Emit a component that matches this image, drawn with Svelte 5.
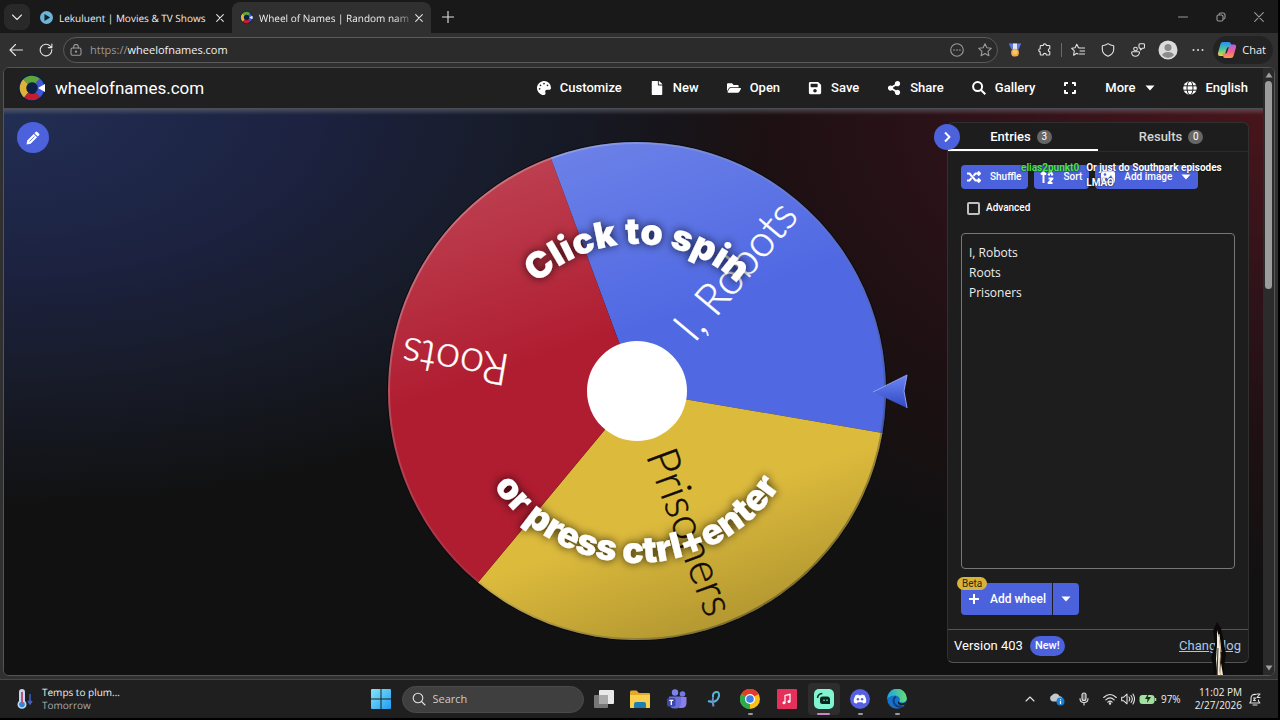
<script>
  const navItems = [
    { label: 'Customize', box: '0 0 512 512', d: 'M204.3 5C104.9 24.4 24.8 104.3 5.2 203.4c-37 187 131.7 326.4 258.8 306.7 41.2-6.4 61.4-54.6 42.5-91.7-23.1-45.4 9.9-98.4 60.9-98.4h79.7c35.8 0 64.8-29.6 64.9-65.3C511.5 97.1 368.1-26.9 204.3 5zM96 320c-17.7 0-32-14.3-32-32s14.3-32 32-32 32 14.3 32 32-14.3 32-32 32zm32-128c-17.7 0-32-14.3-32-32s14.3-32 32-32 32 14.3 32 32-14.3 32-32 32zm128-64c-17.7 0-32-14.3-32-32s14.3-32 32-32 32 14.3 32 32-14.3 32-32 32zm128 64c-17.7 0-32-14.3-32-32s14.3-32 32-32 32 14.3 32 32-14.3 32-32 32z' },
    { label: 'New', box: '0 0 384 512', d: 'M224 136V0H24C10.7 0 0 10.7 0 24v464c0 13.3 10.7 24 24 24h336c13.3 0 24-10.7 24-24V160H248c-13.2 0-24-10.8-24-24zm160-14.1v6.1H256V0h6.1c6.4 0 12.5 2.5 17 7l97.9 98c4.5 4.5 7 10.6 7 16.9z' },
    { label: 'Open', box: '0 0 576 512', d: 'M572.694 292.093L500.27 416.248A63.997 63.997 0 0 1 444.989 448H45.025c-18.523 0-30.064-20.093-20.731-36.093l72.424-124.155A64 64 0 0 1 152 256h399.964c18.523 0 30.064 20.093 20.73 36.093zM152 224h328v-48c0-26.51-21.49-48-48-48H272l-64-64H48C21.49 64 0 85.49 0 112v278.046l69.077-118.418C86.214 242.25 117.989 224 152 224z' },
    { label: 'Save', box: '0 0 448 512', d: 'M433.941 129.941l-83.882-83.882A48 48 0 0 0 316.118 32H48C21.49 32 0 53.49 0 80v352c0 26.51 21.49 48 48 48h352c26.51 0 48-21.49 48-48V163.882a48 48 0 0 0-14.059-33.941zM224 416c-35.346 0-64-28.654-64-64 0-35.346 28.654-64 64-64s64 28.654 64 64c0 35.346-28.654 64-64 64zm96-304.52V212c0 6.627-5.373 12-12 12H76c-6.627 0-12-5.373-12-12V108c0-6.627 5.373-12 12-12h228.52c3.183 0 6.235 1.264 8.485 3.515l3.48 3.48A11.996 11.996 0 0 1 320 111.48z' },
    { label: 'Share', box: '0 0 448 512', d: 'M352 320c-22.608 0-43.387 7.819-59.79 20.895l-102.486-64.054a96.551 96.551 0 0 0 0-41.683l102.486-64.054C308.613 184.181 329.392 192 352 192c53.019 0 96-42.981 96-96S405.019 0 352 0s-96 42.981-96 96c0 7.158.79 14.13 2.276 20.841L155.79 180.895C139.387 167.819 118.608 160 96 160c-53.019 0-96 42.981-96 96s42.981 96 96 96c22.608 0 43.387-7.819 59.79-20.895l102.486 64.054A96.301 96.301 0 0 0 256 416c0 53.019 42.981 96 96 96s96-42.981 96-96-42.981-96-96-96z' }
  ];

  // Wheel geometry, in the svg's own units
  const cx = 637, cy = 391, radius = 249;
  const point = (deg, r) => {
    const a = (deg * Math.PI) / 180;
    return `${cx + r * Math.cos(a)} ${cy + r * Math.sin(a)}`;
  };
  const slices = [
    { name: 'I, Robots', from: -110.3, fill: '#5069e3', ink: '#fff' },
    { name: 'Prisoners', from: 9.7, fill: '#dcba3c', ink: '#120c02' },
    { name: 'Roots', from: 129.7, fill: '#b01c30', ink: '#fff' }
  ];
  let entries = $state('I, Robots\nRoots\nPrisoners');
  let advanced = $state(false);
</script>

<div class="screen">
  <div class="tabs">
    <button class="tab-menu" aria-label="Tab actions"><svg width="12" height="12" viewBox="0 0 12 12" class="line"><path d="M1.500 4L6 8.500 10.500 4" /></svg></button>
    <div class="tab">
      <svg width="13" height="13" viewBox="0 0 14 14"><circle cx="7" cy="7" r="7" fill="#6cb5d8" /><path d="M4.800 3.300v7.400L11 7z" fill="#12242e" /></svg>
      <span class="tab-title">Lekuluent | Movies &amp; TV Shows</span>
      <button aria-label="Close tab"><svg width="8" height="8" viewBox="0 0 8 8" class="line"><path d="M.7.7l6.600 6.600M7.300.7L.7 7.300" /></svg></button>
    </div>
    <div class="tab active">
      {@render brand(13)}
      <span class="tab-title">Wheel of Names | Random name p</span>
      <button aria-label="Close tab"><svg width="8" height="8" viewBox="0 0 8 8" class="line"><path d="M.7.7l6.600 6.600M7.300.7L.7 7.300" /></svg></button>
    </div>
    <button class="new-tab" aria-label="New tab"><svg width="12" height="12" viewBox="0 0 12 12" class="line"><path d="M6 0v12M0 6h12" /></svg></button>
    <div class="window-buttons">
      <button aria-label="Minimize"><svg width="10" height="10" viewBox="0 0 10 10" class="line"><path d="M.5 5h9" /></svg></button>
      <button aria-label="Restore"><svg width="10" height="10" viewBox="0 0 10 10" class="line"><rect x="1" y="3" width="6" height="6" rx="1.500" /><path d="M3 2.500Q3 1 4.500 1H7q2 0 2 2v2.500Q9 7 7.500 7" /></svg></button>
      <button aria-label="Close"><svg width="10" height="10" viewBox="0 0 10 10" class="line"><path d="M.7.7l8.600 8.600M9.300.7L.7 9.300" /></svg></button>
    </div>
  </div>

  <div class="toolbar">
    <button aria-label="Back"><svg width="14" height="14" viewBox="0 0 14 14" class="line"><path d="M13.500 7H1M6.500 1.500L1 7l5.500 5.500" /></svg></button>
    <button aria-label="Refresh"><svg width="14" height="14" viewBox="0 0 14 14" class="line"><path d="M12.800 6.500a5.800 5.800 0 1 1-1.500-3.400L12.800 4.500M12.900 1v3.600H9.300" /></svg></button>
    <div class="address">
      <svg width="12" height="12" viewBox="0 0 12 12" class="line dim"><rect x="1" y="4" width="10" height="7.300" rx="1.500" /><path d="M3.700 4V2.700a2.300 2.300 0 0 1 4.600 0V4" /><circle cx="6" cy="7.700" r=".6" /></svg>
      <a class="url" href="https://wheelofnames.com"><span>https://</span>wheelofnames.com</a>
      <button aria-label="Page options"><svg width="14" height="14" viewBox="0 0 14 14" class="line dim"><circle cx="7" cy="7" r="6.300" /><path d="M3.700 7h1M6.500 7h1M9.300 7h1" /></svg></button>
      <button aria-label="Add to favorites"><svg width="14" height="14" viewBox="0 0 14 14" class="line dim"><path d="M7 .8l1.900 4 4.300.5-3.200 3 .9 4.400L7 10.500l-3.900 2.200.9-4.400-3.200-3 4.300-.5z" /></svg></button>
    </div>
    <div class="extensions">
      <button aria-label="Rewards"><svg width="14" height="14" viewBox="0 0 14 14"><path d="M.8.5h12.400L10.500 6.500h-7z" fill="#5c78df" /><path d="M5 .5h4v6H5z" fill="#dce7ff" /><circle cx="7" cy="9.700" r="3.900" fill="#f0ac45" /><circle cx="7" cy="9.200" r="2.300" fill="#ffc765" /></svg></button>
      <button aria-label="Extensions"><svg width="14" height="14" viewBox="0 0 14 14" class="line"><path d="M3 2.500h2.200a1.600 1.600 0 0 1 3.200 0H11q.8 0 .8.800v2.400a1.500 1.500 0 0 0 0 3v2.500q0 .8-.8.800H8.400a1.600 1.600 0 0 0-3.200 0H3q-.8 0-.8-.8V8.700a1.500 1.500 0 0 1 0-3V3.300q0-.8.8-.8z" /></svg></button>
      <i class="divider"></i>
      <button aria-label="Favorites"><svg width="14" height="14" viewBox="0 0 14 14" class="line"><path d="M8.300 5L7.500 4.800 5.800 1.200 4.100 4.800.7 5.300l2.600 2.600-.7 4.300 3.200-2 1.200.7M8.500 5H14M9 8h5M8.500 11H14" /></svg></button>
      <button aria-label="Security"><svg width="14" height="14" viewBox="0 0 14 14" class="line"><path d="M7 .7q2.300 1.900 5.700 2v3.800Q12.500 11 7 13.300 1.500 11 1.300 6.500V2.700Q4.700 2.600 7 .7z" /></svg></button>
      <button aria-label="Share feedback"><svg width="14" height="14" viewBox="0 0 14 14" class="line"><circle cx="4.500" cy="6" r="1.800" /><path d="M1.500 8.800h6.200q1 0 .7 1.200-.7 3.200-4 3.200T.7 10q-.2-1.200.8-1.200zM9 .8h3.500q1 0 1 1v2.400q0 1-1 1h-1L9.500 7V5.200H9q-1 0-1-1V1.800q0-1 1-1z" /></svg></button>
      <button aria-label="Profile"><svg width="20" height="20" viewBox="0 0 20 20"><circle cx="10" cy="10" r="9.500" fill="#dcdcdc" /><circle cx="10" cy="7.500" r="3.500" fill="#8b8b8b" /><path d="M4 15q1.500-3 6-3t6 3q-2.500 3-6 3t-6-3z" fill="#8b8b8b" /></svg></button>
      <button aria-label="More tools"><svg width="12" height="4" viewBox="0 0 12 4" fill="#ddd"><circle cx="1.500" cy="2" r="1" /><circle cx="6" cy="2" r="1" /><circle cx="10.500" cy="2" r="1" /></svg></button>
    </div>
    <button class="chat">
      <svg width="20" height="18" viewBox="0 0 20 18"><defs><linearGradient id="cpA" x1="0" y1="0" x2="0" y2="1"><stop offset="0" stop-color="#2c8cf2" /><stop offset=".5" stop-color="#44c8a0" /><stop offset="1" stop-color="#f4cf3a" /></linearGradient><linearGradient id="cpB" x1="0" y1="0" x2="0" y2="1"><stop offset="0" stop-color="#a665ee" /><stop offset=".5" stop-color="#f0608e" /><stop offset="1" stop-color="#ff9a4d" /></linearGradient></defs><path d="M6 1h6q1.500 0 2 2l.8 3h-3q-1.500 0-2 1.500L8 13q-.6 2-2 2H3Q.5 15 1 12L3.500 3Q4 1 6 1z" fill="url(#cpA)" /><path d="M14 17H8q-1.500 0-2-2l-.4-2.500h2.600q1.500 0 2-1.500L12 5.500Q12.600 3.500 14 3.500h3q2.500 0 2 3L16.500 15Q16 17 14 17z" fill="url(#cpB)" /></svg>
      Chat
    </button>
  </div>

  <div class="viewport">
    <div class="page">
      <header>
        <a class="brand" href="https://wheelofnames.com">{@render brand(28)}<span>wheelofnames.com</span></a>
        <nav>
          {#each navItems as item}
            <button><svg width="14" height="14" viewBox={item.box} fill="currentColor"><path d={item.d} /></svg>{item.label}</button>
          {/each}
          <button><svg width="14" height="14" viewBox="0 0 14 14" class="line bold"><circle cx="5.600" cy="5.600" r="4.500" /><path d="M9 9l4.300 4.300" /></svg>Gallery</button>
          <button aria-label="Fullscreen"><svg width="14" height="14" viewBox="0 0 14 14" class="line bold"><path d="M2 5V2h3M9 2h3v3M12 9v3H9M5 12H2V9" /></svg></button>
          <button>More<svg width="10" height="6" viewBox="0 0 10 6" fill="currentColor"><path d="M.5.5h9L5 5.500z" /></svg></button>
          <button><svg width="14" height="14" viewBox="0 0 14 14"><circle cx="7" cy="7" r="6.800" fill="#fff" /><g fill="none" stroke="#202020" stroke-width="1"><ellipse cx="7" cy="7" rx="3" ry="7" /><path d="M0 4.800h14M0 9.200h14" /></g></svg>English</button>
        </nav>
      </header>

      <main>
        <button class="edit" aria-label="Edit title"><svg width="14" height="14" viewBox="0 0 14 14" fill="#fff"><path d="M9.700.9q.8-.8 1.600 0l1.800 1.800q.8.8 0 1.600l-1.300 1.300-3.400-3.400zM7.700 2.900l3.400 3.400-6.500 6.500L.5 13.500l.7-4.100z" /><path d="M3.500 10.500l5-5" stroke="#4b62dc" stroke-width=".8" /></svg></button>

        <svg class="wheel" viewBox="358 109 551 566" role="img" aria-label="Click to spin or press ctrl+enter">
          <defs>
            <linearGradient id="sheen" x1=".3" y1="0" x2=".65" y2="1">
              <stop offset="0" stop-color="#fff" stop-opacity=".17" /><stop offset=".4" stop-color="#fff" stop-opacity="0" />
              <stop offset=".75" stop-color="#000" stop-opacity="0" /><stop offset="1" stop-color="#000" stop-opacity=".2" />
            </linearGradient>
            <linearGradient id="rim" x1="0" y1="0" x2="1" y2="1">
              <stop offset="0" stop-color="#fff" stop-opacity=".4" /><stop offset=".5" stop-color="#888" stop-opacity=".2" /><stop offset="1" stop-color="#000" stop-opacity=".5" />
            </linearGradient>
            <linearGradient id="pin" x1="0" y1="0" x2="0" y2="1"><stop offset="0" stop-color="#6d86f4" /><stop offset="1" stop-color="#3049c4" /></linearGradient>
            <filter id="glow" x="-30%" y="-60%" width="160%" height="220%"><feDropShadow dx="0" dy="0" stdDeviation="5" flood-color="#000" flood-opacity=".8" /></filter>
            <path id="arcTop" d="M490 391A147 147 0 0 1 784 391" />
            <path id="arcBottom" d="M465 391A172 172 0 0 0 809 391" />
          </defs>
          <circle {cx} {cy} r={radius + 1} fill="#0b0b10" />
          {#each slices as s}
            <path fill={s.fill} d={`M${cx} ${cy}L${point(s.from, radius)}A${radius} ${radius} 0 0 1 ${point(s.from + 120, radius)}Z`} />
          {/each}
          <circle {cx} {cy} r={radius} fill="url(#sheen)" />
          <circle {cx} {cy} r={radius - 1} fill="none" stroke="url(#rim)" stroke-width="2" />
          {#each slices as s}
            <text class="slice" fill={s.ink} stroke={s.ink} x={cx + 238} y={cy + 14} transform={`rotate(${s.from + 60} ${cx} ${cy})`}>{s.name}</text>
          {/each}
          <circle {cx} {cy} r="50" fill="#fff" />
          <text class="hint" filter="url(#glow)"><textPath href="#arcTop" startOffset="50%">Click to spin</textPath></text>
          <text class="hint" filter="url(#glow)"><textPath href="#arcBottom" startOffset="50%">or press ctrl+enter</textPath></text>
          <path d="M873 392L907 375 904 391 907 408z" fill="url(#pin)" />
          <path d="M873 392L907 375 904 391 907 408" fill="none" stroke="#8ea0f8" />
        </svg>

        <aside>
          <button class="collapse" aria-label="Hide panel"><svg width="12" height="12" viewBox="0 0 12 12" class="line bold"><path d="M4 1.500L8.500 6 4 10.500" /></svg></button>
          <div class="panel-tabs">
            <button class="current">Entries <b>3</b></button>
            <button>Results <b>0</b></button>
          </div>
          <div class="panel-body">
            <div class="tools">
              <button><svg width="14" height="12" viewBox="0 0 14 12" class="line bold"><path d="M0 2.500h2.500l6 7H13M0 9.500h2.500L4.500 7.200M6.500 4.800l2-2.300H13M11 .5l2 2-2 2M11 7.500l2 2-2 2" /></svg>Shuffle</button>
              <button><svg width="14" height="14" viewBox="0 0 14 14" class="line bold"><path d="M3.500 13V2M1 4.500L3.500 2 6 4.500M8.500 5.500L10.500 1l2 4.500M8.500 8.500h4L8.500 13h4" /></svg>Sort</button>
              <button><svg width="14" height="14" viewBox="0 0 14 14"><rect x="0" y="1" width="14" height="12" rx="2" fill="#fff" /><circle cx="4" cy="4.500" r="1.300" fill="#4b62dc" /><path d="M2 11l3-3.500L7 9l3-4 2.500 6z" fill="#4b62dc" /></svg>Add image<svg width="10" height="6" viewBox="0 0 10 6" fill="#fff"><path d="M.5.5h9L5 5.500z" /></svg></button>
              <p class="chat-line"><span>elias2punkt0</span><span>Or just do Southpark episodes LMAO</span></p>
            </div>
            <label class="advanced"><input type="checkbox" bind:checked={advanced} />Advanced</label>
            <textarea aria-label="Entries" bind:value={entries} spellcheck="false"></textarea>
            <div class="add">
              <button><svg width="12" height="12" viewBox="0 0 12 12" class="line bold"><path d="M6 1v10M1 6h10" /></svg>Add wheel</button>
              <button aria-label="Add wheel options"><svg width="10" height="6" viewBox="0 0 10 6" fill="#fff"><path d="M.5.5h9L5 5.500z" /></svg></button>
              <span class="beta">Beta</span>
            </div>
          </div>
          <footer>
            <span>Version 403</span><span class="new">New!</span><a href="https://wheelofnames.com/changelog">Changelog</a>
            <svg class="cursor" width="16" height="68" viewBox="0 0 16 68"><path d="M7 0L3 9l2 13-4 14 3 10-2 12 5 4 4 5 4-5-1-16 2-14-3-16-2-10z" fill="#0b0a09" /><path d="M7 8l2 7 2 12v14l2 12-2 10-3-4-1-10-1-12 1-14z" fill="#f5efe2" /><path d="M10 18l1 16-1 14 1 8M8 26l-1 28" fill="none" stroke="#3a3022" /><path d="M9 12l2 18M9 36l2 20" fill="none" stroke="#e8c9a0" /></svg>
          </footer>
        </aside>
      </main>
    </div>
    <div class="scrollbar">
      <svg width="8" height="6" viewBox="0 0 8 6" fill="#a0a0a0"><path d="M4 .5L7.500 5.500h-7z" /></svg>
      <i></i>
      <svg width="8" height="6" viewBox="0 0 8 6" fill="#a0a0a0"><path d="M4 5.500L.5.500h7z" /></svg>
    </div>
  </div>

  <div class="taskbar">
    <button class="weather">
      <svg width="18" height="22" viewBox="0 0 18 22"><path d="M3 4a3 3 0 0 1 6 0v9a4.500 4.500 0 1 1-6 0z" fill="#c4d7ef" /><circle cx="6" cy="16.500" r="2.800" fill="#2f86d8" /><path d="M6 4v12" stroke="#b0577b" stroke-width="2" /><path d="M14 6v9M12 13l2 3 2-3" stroke="#3d61c8" stroke-width="1.500" fill="none" /></svg>
      <span>Temps to plum...<em>Tomorrow</em></span>
    </button>
    <div class="dock">
      <button aria-label="Start"><svg width="20" height="20" viewBox="0 0 20 20"><defs><linearGradient id="win" x1="0" y1="0" x2="1" y2="1"><stop offset="0" stop-color="#86e4fb" /><stop offset="1" stop-color="#1f9df0" /></linearGradient></defs><path d="M1 0h8.500v9.500H0V1q0-1 1-1zM10.500 0H19q1 0 1 1v8.500h-9.500zM0 10.500h9.500V20H1q-1 0-1-1zM10.500 10.500H20V19q0 1-1 1h-8.500z" fill="url(#win)" /></svg></button>
      <label class="search"><svg width="14" height="14" viewBox="0 0 14 14" class="line"><circle cx="6" cy="6" r="4.800" /><path d="M9.500 9.500L13 13" /></svg><input type="text" placeholder="Search" aria-label="Search" /></label>
      <div class="apps">
        <button aria-label="Task view"><svg width="20" height="20" viewBox="0 0 20 20"><rect x="0" y="6" width="14" height="13" rx="1" fill="#777" /><rect x="5" y="1" width="15" height="14" rx="1" fill="#e9e9e9" /><path d="M5 6h9v9H5z" fill="#aaa" /></svg></button>
        <button aria-label="File Explorer"><svg width="20" height="20" viewBox="0 0 20 20"><path d="M0 3q0-1.500 1.500-1.500h5L9 4h10q1 0 1 1v13q0 1-1 1H1q-1 0-1-1z" fill="#e3a92c" /><path d="M0 6h20v12q0 1-1 1H1q-1 0-1-1z" fill="#fbd04f" /><path d="M4 19v-4q0-2 2-2h8q2 0 2 2v4z" fill="#1f7fb2" /></svg></button>
        <button aria-label="Teams"><svg width="20" height="20" viewBox="0 0 20 20"><circle cx="8" cy="3.500" r="3.200" fill="#7b83eb" /><circle cx="15.500" cy="5" r="2.800" fill="#7478e0" /><path d="M12 8h7.500v6q0 5-5 5H12z" fill="#8a7fe8" /><path d="M2 7.500h12v6q0 6-6 6T2 13.500z" fill="#6a70e0" /><rect y="9" width="8.500" height="8.500" rx="1.500" fill="#3f47ad" /><path d="M2.300 11.300h4M4.300 11.300v4.700" stroke="#fff" stroke-width="1.300" /></svg></button>
        <button aria-label="Ribbon app"><svg width="16" height="18" viewBox="0 0 16 18" fill="none" stroke-width="2"><path d="M2 11q9 3 11-5 .5-4.500-3-4T7 7.500" stroke="#55b5d7" /><path d="M7 7.500Q6 11 7.500 16.500" stroke="#7389c9" /></svg></button>
        <button class="open" aria-label="Chrome"><svg width="20" height="20" viewBox="0 0 20 20"><circle cx="10" cy="10" r="10" fill="#fbc116" /><path d="M10 10L1.300 5A10 10 0 0 1 18.700 5z" fill="#e33b2e" /><path d="M10 10L1.300 5A10 10 0 0 0 10 20z" fill="#2da94f" /><circle cx="10" cy="10" r="5" fill="#fff" /><circle cx="10" cy="10" r="3.800" fill="#3f7fe8" /></svg></button>
        <button aria-label="Music"><svg width="20" height="20" viewBox="0 0 20 20"><rect width="20" height="20" rx="1" fill="#e4305a" /><path d="M8 13.500V6.500l5-1.200v7" fill="none" stroke="#fff" stroke-width="1.200" /><circle cx="7" cy="13.700" r="1.500" fill="#fff" /><circle cx="12" cy="12.500" r="1.500" fill="#fff" /></svg></button>
        <button class="open focus" aria-label="Streamlabs"><svg width="20" height="20" viewBox="0 0 20 20"><rect width="20" height="20" rx="5" fill="#80f5d2" /><path d="M6 10q0-2.500 2.500-2.500h4.500q3 0 3 3V15H8.500Q6 15 6 12.500z" fill="#09261e" /><path d="M3.500 9Q4 4.800 8.300 4.500" fill="none" stroke="#09261e" stroke-width="1.500" /><path d="M10 10.500v1.500M13 10.500v1.500" stroke="#80f5d2" stroke-width="1.200" /></svg></button>
        <button class="open" aria-label="Discord"><svg width="20" height="20" viewBox="0 0 20 20"><circle cx="10" cy="10" r="10" fill="#5560e2" /><path d="M5.500 6.300Q7 5.500 8.300 5.500l.4.700h2.600l.4-.7q1.300 0 2.800.8 2 3.200 1.700 6.900-1.300 1.200-3 1.300l-.8-1.200H7.600l-.8 1.200q-1.700-.1-3-1.300Q3.500 9.500 5.500 6.300z" fill="#fff" /><circle cx="7.900" cy="10.300" r="1.200" fill="#5560e2" /><circle cx="12.100" cy="10.300" r="1.200" fill="#5560e2" /></svg></button>
        <button class="open" aria-label="Edge"><svg width="20" height="20" viewBox="0 0 20 20"><defs><linearGradient id="edgeTop"><stop offset="0" stop-color="#1fa3e4" /><stop offset="1" stop-color="#66df6b" /></linearGradient></defs><circle cx="10" cy="10" r="9.800" fill="#1672c8" /><path d="M.2 10A9.800 9.800 0 0 1 19.800 9q.2 4.500-4.500 4.500-3.500 0-3-1.500 1.200-1.500 0-3.500-1.500-2-4.500-2Q2.500 6.500.2 10z" fill="url(#edgeTop)" /><path d="M9 7.500Q5.500 10 7 14q2 4.500 8 3.500" fill="none" stroke="#0e3e86" stroke-width="2" /><path d="M19.500 12.500q-2 2-5 1.700-3-.4-2.400-2.200Q10 13 11.500 15t6.500.8z" fill="#1f1f1f" /></svg></button>
      </div>
    </div>
    <div class="tray">
      <button aria-label="Hidden icons"><svg width="10" height="10" viewBox="0 0 10 10" class="line"><path d="M1 7l4-4 4 4" /></svg></button>
      <button aria-label="OneDrive"><svg width="16" height="14" viewBox="0 0 16 14"><path d="M3.500 9.500A3.300 3.300 0 0 1 3 3.300Q5 .5 8 1.800q2 .8 2.500 2.500 3 .2 3 2.700t-2.500 2.500z" fill="#c3c8cd" /><circle cx="11.500" cy="9.500" r="4" fill="#1c7fd0" /><path d="M11.500 7.200v1M11.500 9v3" stroke="#fff" stroke-width="1.200" /></svg></button>
      <button aria-label="Microphone"><svg width="10" height="14" viewBox="0 0 10 14" class="line"><rect x="3" y="1" width="4" height="7.500" rx="2" fill="#666" /><path d="M1 6.500q0 4 4 4t4-4M5 10.500V13" /></svg></button>
      <button class="status" aria-label="Network, volume and battery">
        <svg width="14" height="12" viewBox="0 0 14 12" class="line"><path d="M.7 4.500q6.300-6 12.600 0M2.800 6.900q4.200-4 8.400 0M4.800 9.100q2.200-2 4.400 0" /><circle cx="7" cy="10.500" r=".7" fill="#ddd" /></svg>
        <svg width="14" height="12" viewBox="0 0 14 12" class="line"><path d="M.7 4.200h2L6 1.200v9.600L2.700 7.800h-2zM8 4q1.500 2 0 4M10 2.500q2.600 3.500 0 7M12 1q3 5 0 10" /></svg>
        <svg width="18" height="12" viewBox="0 0 18 12"><rect x=".5" y="2" width="15" height="9" rx="3" fill="#a1e0a0" /><path d="M16.500 5v3" stroke="#a1e0a0" stroke-width="1.500" /><path d="M9.500 0L6 6h2.500L8 10l4-6H9z" fill="#1d321d" /></svg>
        97%
      </button>
      <div class="corner">
        <button class="clock"><span>11:02 PM</span><span>2/27/2026</span></button>
        <button aria-label="Notifications"><svg width="12" height="13" viewBox="0 0 12 13" class="line"><path d="M7 1.500Q2 .8 2 5.500V8L.8 10h10L9.500 8V7M4 12h4M8 1h3L8 4.500h3M4.500 5h2l-2 2.500h2" /></svg></button>
      </div>
    </div>
  </div>
</div>

{#snippet brand(size)}
  <svg width={size} height={size} viewBox="0 0 28 28" fill="none" stroke-width="6.500">
    <circle cx="14" cy="14" r="14" fill="#0d2142" />
    <path d="M7.600 7.600A9 9 0 0 1 19.800 7.100" stroke="#5fa53a" />
    <path d="M8.200 20.900A9 9 0 0 1 7.600 7.600" stroke="#dfb436" />
    <path d="M19.800 20.900A9 9 0 0 1 8.200 20.900" stroke="#c41d32" />
    <path d="M19.800 7.100A9 9 0 0 1 19.800 20.900" stroke="#4257d6" />
    <path d="M20 14l7-4v8z" fill="#fff" />
  </svg>
{/snippet}

<style>
  :global(body) { margin: 0; background: #000; }
  * { box-sizing: border-box; }
  button { border: 0; padding: 0; margin: 0; background: none; color: inherit; font: inherit; display: inline-flex; align-items: center; justify-content: center; flex: none; }
  svg { display: block; flex: none; }
  a { color: inherit; text-decoration: none; }
  .line { fill: none; stroke: #e2e2e2; stroke-width: 1.1; stroke-linecap: round; stroke-linejoin: round; }
  .line.bold { stroke: #fff; stroke-width: 2; stroke-linecap: butt; }
  .line.dim { stroke: #9b9b9b; }

  .screen { min-height: 100vh; display: flex; flex-direction: column; background: #303030; color: #eee; font: 11px/14px "Open Sans", "Noto Sans", sans-serif; border-right: 2px solid #000; border-bottom: 2px solid #000; }

  .tabs { height: 33px; display: flex; align-items: flex-end; background: #191919; padding-left: 4px; }
  .tab-menu { width: 26px; height: 26px; margin: 0 2px 3px 0; border-radius: 8px; background: #292929; }
  .tab { width: 200px; height: 31px; padding: 0 8px; display: flex; align-items: center; gap: 6px; border-radius: 8px 8px 0 0; }
  .tab.active { background: #303030; width: 199px; }
  .tab-title { flex: 1; overflow: hidden; white-space: nowrap; font-size: 10px; text-rendering: geometricPrecision; }
  .tab.active .tab-title { mask-image: linear-gradient(90deg, #000 90%, #0004); }
  .new-tab { width: 34px; height: 32px; }
  .window-buttons { margin-left: auto; display: flex; align-self: center; color: #888; }
  .window-buttons button { width: 38px; height: 32px; }
  .window-buttons .line { stroke: #999; }

  .toolbar { height: 34px; display: flex; align-items: center; padding: 0 5px 0 1px; }
  .toolbar > button:not(.chat) { width: 30px; height: 28px; }
  .address { flex: 1; height: 26px; margin: 0 2px; padding: 0 2px 0 6px; border: 1px solid #5a5a5a; border-radius: 13px; background: #2b2b2b; display: flex; align-items: center; gap: 8px; }
  .address button { width: 20px; height: 20px; }
  .url { flex: 1; color: #f2f2f2; }
  .url span { color: #999; }
  .extensions { display: flex; align-items: center; }
  .extensions button { width: 30px; height: 28px; }
  .divider { width: 1px; height: 14px; margin: 0 1px; background: #6a6a6a; }
  .chat { height: 28px; padding: 0 7px 0 4px; gap: 5px; border-radius: 14px; background: #232323; }

  .viewport { flex: 1; margin: 0 3px 3px; display: flex; border: 1px solid #555; border-radius: 6px; overflow: hidden; background: #111; }
  .page { flex: 1; display: flex; flex-direction: column; font-family: Roboto, sans-serif; color: #fff; }
  header { height: 41px; padding: 0 15px 0 14px; display: flex; align-items: center; justify-content: space-between; background: #202020; border-bottom: 1px solid #4b4d57; }
  .brand { display: flex; align-items: center; gap: 9px; font-size: 17px; line-height: 24px; }
  nav { display: flex; align-items: center; gap: 28px; font-size: 13px; line-height: 18px; font-weight: 500; }
  nav button { gap: 9px; }

  main { flex: 1; position: relative; display: grid; grid-template-columns: 1fr auto 1fr; background: linear-gradient(#8886 0, #8880 6px), radial-gradient(ellipse 760px 400px at 0 0, #222e54, #1c2240 40%, #171b28 70%, #11111100), radial-gradient(ellipse 720px 480px at 100% 0, #48151c, #2b1219 45%, #1d1012 70%, #11111100), #111; }
  .edit { position: absolute; left: 13px; top: 13px; width: 32px; height: 31px; border-radius: 50%; background: #4b62dc; }
  .wheel { grid-column: 2; width: 551px; height: 566px; }
  .slice { font: 300 44px Lato, sans-serif; text-anchor: end; stroke-width: .4; }
  .hint { font: 900 36px Inter, Roboto, sans-serif; fill: #fff; text-anchor: middle; }

  aside { position: relative; justify-self: end; width: 302px; margin: 13px 14px 12px 0; display: flex; flex-direction: column; background: #1d1d1d; border: 1px solid #303030; border-bottom-color: #555; border-radius: 6px; }
  .collapse { position: absolute; left: -14px; top: 1px; width: 26px; height: 26px; border-radius: 50%; background: #4b62dc; z-index: 1; }
  .panel-tabs { display: grid; grid-template-columns: 1fr 1fr; height: 29px; border-bottom: 1px solid #2b2b2b; font-size: 13px; font-weight: 500; }
  .panel-tabs button { gap: 6px; padding: 2px 4px 0 0; color: #d5d5d5; border-bottom: 2px solid transparent; }
  .panel-tabs .current { color: #fff; border-color: #fff; }
  .panel-tabs b { width: 15px; height: 14px; border-radius: 7px; background: #666; font-size: 10px; font-weight: 400; color: #fff; }
  .panel-body { flex: 1; display: flex; flex-direction: column; padding: 13px; }
  .tools { position: relative; display: flex; gap: 6px; font-size: 10px; font-weight: 500; }
  .tools > button { height: 24px; padding: 0 7px 0 6px; gap: 9px; border-radius: 4px; background: #4b62dc; }
  .chat-line { position: absolute; left: 60px; top: -5px; width: 210px; margin: 0; display: flex; gap: 7px; font-size: 10px; line-height: 15px; font-weight: 700; text-shadow: 0 0 2px #000; }
  .chat-line span:first-child { color: #4be53d; }
  .advanced { display: flex; align-items: center; gap: 6px; margin: 12px 0 18px 6px; font-size: 10px; font-weight: 500; }
  .advanced input { appearance: none; width: 13px; height: 13px; margin: 0; border: 2px solid #c0c0c0; border-radius: 2px; }
  textarea { flex: 1; resize: none; padding: 9px 7px; background: none; color: #eee; border: 1px solid #777; border-radius: 4px; font: 12px/20px "Open Sans", sans-serif; outline: 0; }
  .add { position: relative; display: flex; gap: 1px; margin: 14px 0 1px; font-size: 12px; font-weight: 500; }
  .add button { height: 32px; padding: 0 6px 0 7px; gap: 10px; background: #4b62dc; border-radius: 4px 0 0 4px; }
  .add button + button { padding: 0 8px; border-radius: 0 4px 4px 0; }
  .beta { position: absolute; left: -4px; top: -6px; padding: 0 5px; border-radius: 7px; background: #d9b23a; color: #30270a; font: 10px/13px Roboto, sans-serif; }
  footer { position: relative; display: flex; align-items: center; gap: 7px; height: 33px; padding: 0 7px 0 6px; border-top: 1px solid #555; font-size: 13px; }
  .new { padding: 0 5px; border-radius: 10px; background: #4b62dc; font-size: 11px; line-height: 20px; font-weight: 500; }
  footer a { margin-left: auto; color: #a9c9e8; text-decoration: underline; }
  .cursor { position: absolute; right: 22px; top: -8px; z-index: 2; }

  .scrollbar { width: 11px; padding: 4px 0; display: flex; flex-direction: column; align-items: center; background: #2b2b2b; }
  .scrollbar i { width: 7px; height: 208px; margin: 3px 0 auto; border-radius: 4px; background: #9c9c9c; }

  .taskbar { height: 39px; display: grid; grid-template-columns: 1fr auto 1fr; align-items: center; background: #1f1f1f; border-top: 1px solid #474747; }
  .weather { justify-self: start; margin-left: 16px; gap: 8px; font-size: 10px; line-height: 13px; text-align: left; text-rendering: geometricPrecision; }
  .weather em { display: block; font-style: normal; color: #aaa; }
  .dock { display: flex; align-items: center; gap: 2px; padding-left: 8px; }
  .search { width: 182px; height: 27px; margin-left: 9px; padding: 0 9px; display: flex; align-items: center; gap: 7px; background: #3f3f3f; border: 1px solid #4a4a4a; border-radius: 14px; }
  .search input { min-width: 0; flex: 1; padding: 0; border: 0; background: none; color: #ddd; font: 11px/16px "Open Sans", sans-serif; }
  .search input::placeholder { color: #ccc; }
  .apps { display: grid; grid-template-columns: repeat(9, 1fr); width: 330px; }
  .apps button { position: relative; height: 32px; margin: 0 2px; border-radius: 4px; }
  .apps .open::after { content: ""; position: absolute; bottom: 0; width: 5px; height: 2px; border-radius: 1px; background: #999; }
  .apps .focus { background: #2d2d2d; }
  .apps .focus::after { width: 13px; background: #c58ac6; }
  .tray { justify-self: end; display: flex; align-items: center; gap: 14px; margin-right: 17px; font-size: 10px; }
  .status { gap: 4px; }
  .corner { display: flex; align-items: center; gap: 7px; }
  .clock { flex-direction: column; align-items: flex-end; line-height: 13px; }
</style>
